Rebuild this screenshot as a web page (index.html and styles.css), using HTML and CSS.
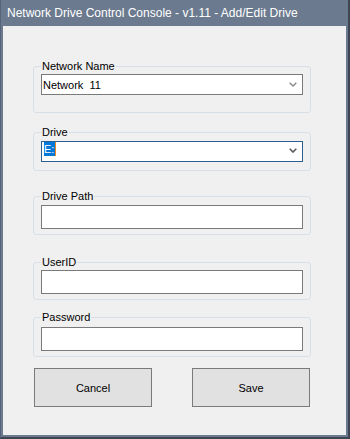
FILE: index.html
```html
<!DOCTYPE html>
<html lang="en">
<head>
    <meta charset="UTF-8">
    <title>Network Drive Control Console - Add/Edit Drive</title>
    <link rel="stylesheet" href="styles.css">
</head>
<body>
    <div class="window">
        <div class="titlebar">Network Drive Control Console - v1.11 - Add/Edit Drive</div>

        <div class="client">
            <!-- Network Name -->
            <fieldset class="group group-network">
                <legend>Network Name</legend>
                <div class="combo">
                    <span class="combo-text">Network&nbsp; 11</span>
                    <svg class="chevron" width="8" height="5" viewBox="0 0 8 5"><path d="M0.7 0.7 L4 4 L7.3 0.7" fill="none" stroke="#8a8a8a" stroke-width="1.4"/></svg>
                </div>
            </fieldset>

            <!-- Drive -->
            <fieldset class="group group-drive">
                <legend>Drive</legend>
                <div class="combo combo-focus">
                    <span class="combo-text"><span class="selected">E:</span><span class="caret"></span></span>
                    <svg class="chevron" width="8" height="5" viewBox="0 0 8 5"><path d="M0.7 0.7 L4 4 L7.3 0.7" fill="none" stroke="#5a5a5a" stroke-width="1.6"/></svg>
                </div>
            </fieldset>

            <!-- Drive Path -->
            <fieldset class="group group-path">
                <legend>Drive Path</legend>
                <input type="text" class="textbox">
            </fieldset>

            <!-- UserID -->
            <fieldset class="group group-user">
                <legend>UserID</legend>
                <input type="text" class="textbox">
            </fieldset>

            <!-- Password -->
            <fieldset class="group group-pass">
                <legend>Password</legend>
                <input type="password" class="textbox">
            </fieldset>

            <div class="buttons">
                <button class="btn">Cancel</button>
                <button class="btn">Save</button>
            </div>
        </div>
    </div>
</body>
</html>
```
FILE: styles.css
```css
body {
    margin: 0;
    font-family: "Liberation Sans", Arial, sans-serif;
    background-color: #6b7a8e;
}
.window {
    width: 350px;
    height: 439px;
    box-sizing: border-box;
    background-color: #6b7a8e;
    border-left: 1px solid #56637a;
    border-right: 2px solid #3e4553;
    border-bottom: 2px solid #3e4553;
}
.titlebar {
    height: 26px;
    line-height: 26px;
    padding-left: 6px;
    font-size: 12px;
    color: #ffffff;
    white-space: nowrap;
}
.client {
    height: 409px;
    margin: 0 2px 0 2px;
    background-color: #f0f0f0;
    padding-top: 33px;
    box-sizing: border-box;
}
.group {
    width: 278px;
    box-sizing: border-box;
    margin: 0 0 0 30px;
    padding: 0 7px 5px 7px;
    border: 1px solid #d8dfe6;
    border-radius: 3px;
    min-inline-size: 0;
}
.group legend {
    font-size: 11px;
    line-height: 14px;
    padding: 0 1px;
    color: #000000;
}
.group-network {
    padding-top: 1px;
    padding-bottom: 17px;
}
.group-drive {
    margin-top: 12px;
    padding-top: 2px;
    padding-bottom: 8px;
}
.group-path {
    margin-top: 18px;
    padding-top: 2px;
}
.group-user {
    margin-top: 20px;
    padding-top: 1px;
}
.group-pass {
    margin-top: 10px;
    padding-top: 3px;
}
.combo {
    height: 21px;
    box-sizing: border-box;
    border: 1px solid #7a7a7a;
    background-color: #ffffff;
    display: flex;
    align-items: center;
    justify-content: space-between;
    padding: 0 5px 0 1px;
    font-size: 11px;
}
.combo-focus {
    border-color: #2a5f94;
    align-items: flex-start;
}
.combo-text {
    display: flex;
    line-height: 14px;
    white-space: pre;
}
.combo-focus .combo-text {
    padding-left: 1px;
}
.combo-focus .chevron {
    margin-top: 6px;
}
.selected {
    background-color: #0078d7;
    color: #ffffff;
    padding-right: 1px;
}
.caret {
    width: 1px;
    background-color: #f08a24;
}
.textbox {
    display: block;
    width: 262px;
    height: 24px;
    box-sizing: border-box;
    border: 1px solid #7a7a7a;
    background-color: #ffffff;
    margin: 0;
    padding: 0 2px;
    font-family: inherit;
    font-size: 11px;
    outline: none;
}
.buttons {
    display: flex;
    gap: 40px;
    margin: 11px 0 0 31px;
}
.btn {
    width: 118px;
    height: 39px;
    box-sizing: border-box;
    background-color: #e1e1e1;
    border: 1px solid #7a7a7a;
    font-family: inherit;
    font-size: 11px;
    color: #000000;
    padding: 0;
}
```
